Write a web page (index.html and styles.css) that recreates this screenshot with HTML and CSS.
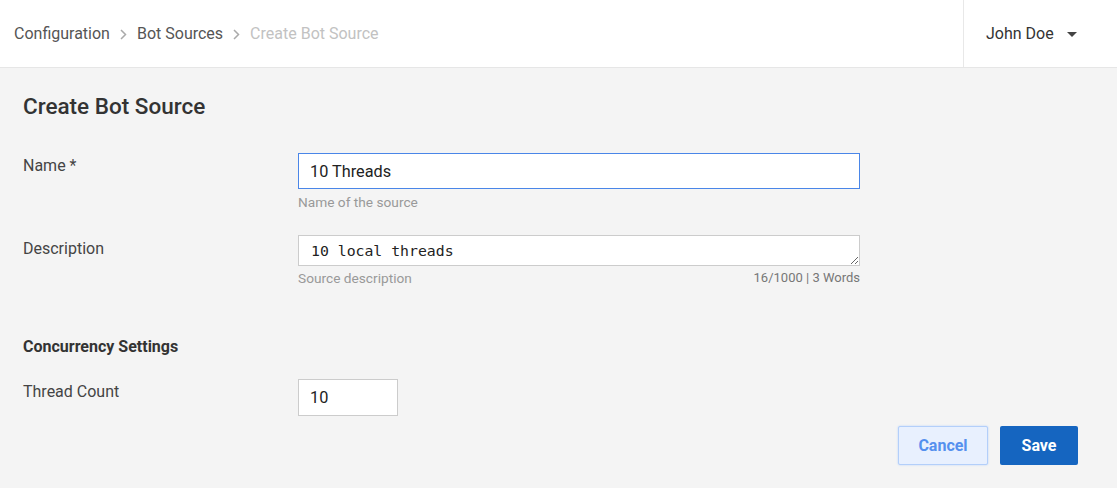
FILE: index.html
```html
<!DOCTYPE html>
<html lang="en">

<head>
    <meta charset="UTF-8">
    <meta name="viewport" content="width=device-width, initial-scale=1.0">
    <title>Create Bot Source</title>
    <link rel="stylesheet" href="styles.css">
</head>

<body>
    <div class="header">
        <div class="breadcrumb">
            <a href="#">Configuration</a>
            <svg class="sep" width="7" height="11" viewBox="0 0 7 11"><path d="M1 1l4.5 4.5L1 10" fill="none" stroke="#aaa" stroke-width="1.5"/></svg>
            <a href="#">Bot Sources</a>
            <svg class="sep" width="7" height="11" viewBox="0 0 7 11"><path d="M1 1l4.5 4.5L1 10" fill="none" stroke="#aaa" stroke-width="1.5"/></svg>
            <span class="current">Create Bot Source</span>
        </div>
        <div class="user-menu">
            <span>John Doe</span>
            <svg class="caret" width="10" height="5" viewBox="0 0 10 5"><path d="M0 0h10L5 5z" fill="#444"/></svg>
        </div>
    </div>

    <div class="page">
        <h1>Create Bot Source</h1>

        <div class="form-row">
            <label for="name">Name *</label>
            <div class="field">
                <input type="text" id="name" class="text-input focused" value="10 Threads">
                <div class="help">Name of the source</div>
            </div>
        </div>

        <div class="form-row">
            <label for="description">Description</label>
            <div class="field">
                <textarea id="description" rows="1">10 local threads</textarea>
                <div class="help help-split">
                    <span>Source description</span>
                    <span class="counter">16/1000 | 3 Words</span>
                </div>
            </div>
        </div>

        <h3>Concurrency Settings</h3>

        <div class="form-row">
            <label for="threads">Thread Count</label>
            <div class="field">
                <input type="text" id="threads" class="text-input small" value="10">
            </div>
        </div>

        <div class="actions">
            <button class="btn btn-cancel">Cancel</button>
            <button class="btn btn-save">Save</button>
        </div>
    </div>
</body>

</html>
```

FILE: styles.css
```css
body, html {
    margin: 0;
    padding: 0;
    font-family: Roboto, "Liberation Sans", sans-serif;
    background-color: #f4f4f4;
    color: #333;
}

.header {
    background-color: white;
    height: 67px;
    border-bottom: 1px solid #e6e6e6;
    display: flex;
    justify-content: space-between;
    align-items: stretch;
}

.breadcrumb {
    display: flex;
    align-items: center;
    padding-left: 14px;
    font-size: 16px;
}
.breadcrumb a {
    color: #555;
    text-decoration: none;
}
.breadcrumb .sep {
    margin: 1px 10px 0 10px;
}
.breadcrumb .current {
    color: #c2c2c2;
}

.user-menu {
    width: 131px;
    border-left: 1px solid #e8e8e8;
    display: flex;
    align-items: center;
    padding-left: 22px;
    font-size: 16px;
    color: #333;
}
.caret {
    margin-left: 13px;
    margin-top: 1px;
}

.page {
    padding: 25px 39px 20px 23px;
}

h1 {
    margin: 0 0 34px 0;
    font-size: 22.5px;
    line-height: 26px;
    font-weight: 500;
    color: #333;
}

h3 {
    margin: 51px 0 22px 0;
    font-size: 16px;
    line-height: 20px;
    font-weight: 700;
    color: #333;
}

.form-row {
    display: grid;
    grid-template-columns: 275px 562px;
    margin-bottom: 26px;
}

label {
    font-size: 16px;
    line-height: 20px;
    padding-top: 3px;
    color: #444;
}

.text-input {
    box-sizing: border-box;
    width: 100%;
    height: 36px;
    padding: 0 11px;
    border: 1px solid #ccc;
    background-color: white;
    font-family: Roboto, "Liberation Sans", sans-serif;
    font-size: 16.3px;
    color: #222;
    outline: none;
}
.text-input.focused {
    border-color: #4a86e8;
}
.text-input.small {
    width: 100px;
    height: 37px;
}

textarea {
    box-sizing: border-box;
    display: block;
    width: 100%;
    height: 31px;
    margin-top: -1px;
    padding: 5px 12px;
    border: 1px solid #ccc;
    background-color: white;
    font-family: "DejaVu Sans Mono", monospace;
    font-size: 14.8px;
    line-height: 19px;
    color: #222;
    resize: vertical;
    outline: none;
}

.help {
    margin-top: 5px;
    font-size: 13.7px;
    line-height: 16px;
    color: #999;
}
.help-split {
    display: flex;
    justify-content: space-between;
    margin-top: 4px;
}
.counter {
    font-size: 13px;
    color: #777;
}

.actions {
    display: flex;
    justify-content: flex-end;
    gap: 12px;
    margin-top: -16px;
}

.btn {
    height: 39px;
    border-radius: 2px;
    font-family: Roboto, "Liberation Sans", sans-serif;
    font-size: 16px;
    font-weight: 700;
    cursor: pointer;
}
.btn-cancel {
    width: 90px;
    background-color: #e8f0fe;
    border: 1px solid #b3cffa;
    box-shadow: 0 0 2px #b3cffa;
    color: #5590ee;
}
.btn-save {
    width: 78px;
    background-color: #1565c0;
    border: none;
    color: white;
}
```
